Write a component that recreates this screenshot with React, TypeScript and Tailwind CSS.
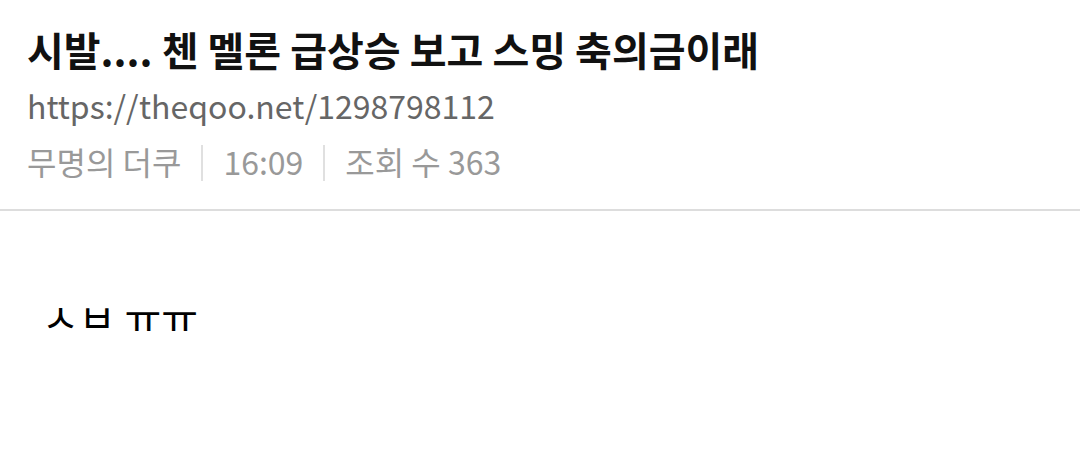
import React from "react";

const font = { fontFamily: '"Noto Sans CJK KR", "Noto Sans", sans-serif' };

function Sep() {
	return <span className="inline-block w-[2px] h-[36px] bg-[#e0e0e0] mx-[20px] mt-[4px]" />;
}

export default function App() {
	return (
		<div className="w-[1080px] h-[459px] bg-white overflow-hidden" style={font}>
			<header className="pl-[27px] pt-[21px] pb-[20px]">
				<h1 className="text-[40px] leading-[56px] font-bold text-[#111] whitespace-nowrap">
					시발.... 첸 멜론 급상승 보고 스밍 축의금이래
				</h1>
				<div className="text-[32px] leading-[56px] text-[#666]">https://theqoo.net/1298798112</div>
				<div className="text-[32px] leading-[56px] text-[#999] flex items-center">
					<span>무명의 더쿠</span>
					<Sep />
					<span>16:09</span>
					<Sep />
					<span>조회 수 363</span>
				</div>
			</header>
			<div className="h-[2px] bg-[#dddddd]" />
			<div className="pl-[42px] pt-[97px]">
				<div className="h-[26px] overflow-hidden">
					<p className="text-[40px] leading-[40px] -mt-[12px] text-black">ㅅㅂ ㅠㅠ</p>
				</div>
			</div>
		</div>
	);
}
